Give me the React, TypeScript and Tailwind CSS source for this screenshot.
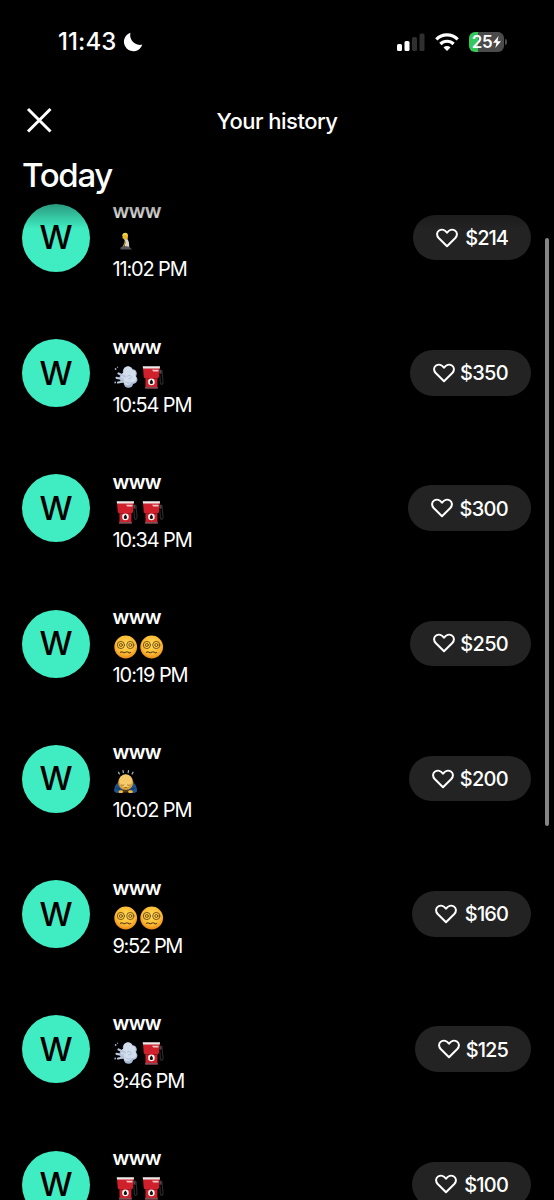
import type { ReactNode } from 'react';

type EmojiName = 'kneel' | 'dash' | 'pump' | 'dizzy' | 'bow';

interface HistoryEntry {
    id: number;
    time: string;
    amount: string;
    emojis: EmojiName[];
    pillClass: string;
    timeClass: string;
    amountClass: string;
}

const entries: HistoryEntry[] = [
    { id: 1, time: '11:02 PM', amount: '$214', emojis: ['kneel'], pillClass: 'w-[118px]', timeClass: 'tracking-[-1.15px]', amountClass: 'tracking-[-1px]' },
    { id: 2, time: '10:54 PM', amount: '$350', emojis: ['dash', 'pump'], pillClass: 'w-[121.5px]', timeClass: 'tracking-[-1.15px]', amountClass: 'tracking-[-0.7px]' },
    { id: 3, time: '10:34 PM', amount: '$300', emojis: ['pump', 'pump'], pillClass: 'w-[123px]', timeClass: 'tracking-[-1.15px]', amountClass: 'tracking-[-0.7px]' },
    { id: 4, time: '10:19 PM', amount: '$250', emojis: ['dizzy', 'dizzy'], pillClass: 'w-[121px]', timeClass: 'tracking-[-1.05px]', amountClass: 'tracking-[-0.7px]' },
    { id: 5, time: '10:02 PM', amount: '$200', emojis: ['bow'], pillClass: 'w-[122.5px]', timeClass: 'tracking-[-1.1px]', amountClass: 'tracking-[-0.7px]' },
    { id: 6, time: '9:52 PM', amount: '$160', emojis: ['dizzy', 'dizzy'], pillClass: 'w-[119px]', timeClass: 'tracking-[-1.35px]', amountClass: 'tracking-[-0.9px]' },
    { id: 7, time: '9:46 PM', amount: '$125', emojis: ['dash', 'pump'], pillClass: 'w-[116px]', timeClass: 'tracking-[-1.2px]', amountClass: 'tracking-[-0.9px]' },
    { id: 8, time: '9:38 PM', amount: '$100', emojis: ['pump', 'pump'], pillClass: 'w-[119px]', timeClass: 'tracking-[-1.3px]', amountClass: 'tracking-[-0.8px]' },
];

const emojiArt: Record<EmojiName, ReactNode> = {
    kneel: (
        <>
            <path d="M9.5 8.500c0-2.200 1.300-3 3-3s2.500 1 2.500 3l-.6 3.200h-3L9.500 10z" fill="#e8b62c" />
            <path d="M9.300 8c0-2.400 1.300-3.200 2.900-3.200 1.800 0 2.800 1.200 2.600 3l-2-.9z" fill="#f6d542" />
            <path d="M11.500 11.200h3c1.600 2 2 5.500 1.500 9h-4.500l.6-4.500z" fill="#d8d6cd" />
            <path d="M12 12.500 10 18l-2 1.800 1.200.5 2-1.800 1.800-4z" fill="#b98c26" />
            <path d="M7.500 19.500c2-1.200 6.500-2 9-.5l2.500 2.400H7.500z" fill="#55525c" />
        </>
    ),
    dash: (
        <>
            <g fill="#a9bbd4">
                <circle cx="15" cy="7.400" r="5.200" />
                <circle cx="19.500" cy="9.500" r="4.300" />
                <circle cx="20" cy="15.500" r="4.400" />
                <circle cx="15.500" cy="19" r="4.800" />
                <circle cx="11.500" cy="14" r="5" />
            </g>
            <g fill="#d3deed">
                <circle cx="15" cy="6.800" r="4.200" />
                <circle cx="19.300" cy="9.300" r="3.400" />
                <circle cx="19.200" cy="14.600" r="4" />
                <circle cx="14.500" cy="17.500" r="3.600" />
                <circle cx="12.500" cy="12.500" r="4.400" />
            </g>
            <path d="M14 12.500c2.500-2 4.500-.6 4.200 1-.3 1.700-2.500 1.800-3 .6M12.500 17.500c1.300 2 3.800 2 5 .4" fill="none" stroke="#a2b5d0" strokeWidth=".8" />
            <path d="M12 12.500 5.500 9.500M10 15l-6.500-1.200M10.500 17.500 5 18.500" stroke="#b9c8dd" strokeWidth="2.200" strokeLinecap="round" />
            <circle cx="2.600" cy="5" r=".9" fill="#9fb2cc" />
            <circle cx="4.500" cy="3.200" r=".7" fill="#8296b2" />
            <circle cx="2.200" cy="18.500" r=".9" fill="#9fb2cc" />
        </>
    ),
    pump: (
        <>
            <path d="M20.500 6.500c2.500-1.200 3 .5 2.700 3l.8 7.500c.3 4-2.500 4.500-2.700 1.200l-.4-7.200" fill="none" stroke="#2c2c31" strokeWidth="1.100" />
            <path d="M20.500 6.200h2v3.500h-2z" fill="#4b4b51" />
            <path d="M4 3.200h16.800l-.8 9.600c-.2 1-.8 1.300-1.600 1.300v10.400H6.500V14.100c-1.200 0-1.700-.5-1.800-1.500z" fill="#cf202c" />
            <path d="M6.500 14h11.900v1H6.500z" fill="#a31420" />
            <path d="M3.700 2.200h17.300l-.2 2.200H4z" fill="#eeeaea" />
            <path d="M13 5.700h6.500v1.700h-5.300z" fill="#f2c4c6" />
            <path d="M6 22.900h12.900v1.600H6z" fill="#77535a" />
            <circle cx="12.400" cy="17.900" r="3.300" fill="#f7f1ef" />
            <path d="M12.400 15.600c.9 1.200 1.600 1.900 1.600 2.800a1.600 1.600 0 0 1-3.200 0c0-.9.700-1.600 1.600-2.800z" fill="#111" />
        </>
    ),
    dizzy: (
        <>
            <defs>
                <radialGradient id="dizzyFace" cx=".5" cy=".4" r=".62">
                    <stop offset="0" stopColor="#ffdc55" />
                    <stop offset=".65" stopColor="#fcbb35" />
                    <stop offset="1" stopColor="#e98412" />
                </radialGradient>
            </defs>
            <circle cx="12.700" cy="13" r="11.400" fill="url(#dizzyFace)" />
            <g fill="none" stroke="#6b4a18" strokeLinecap="round">
                <circle cx="7.900" cy="11" r="3.600" strokeWidth=".9" />
                <circle cx="7.900" cy="11" r="1.500" strokeWidth=".9" />
                <circle cx="17.300" cy="11" r="3.600" strokeWidth=".9" />
                <circle cx="17.300" cy="11" r="1.500" strokeWidth=".9" />
                <path d="M7.500 18.300c.9-.7 1.600-.7 2.500 0s1.700.7 2.600 0 1.700-.7 2.600 0 1.700.7 2.500 0" strokeWidth="1.100" />
            </g>
        </>
    ),
    bow: (
        <>
            <path d="m5.500 3.300.8 1.600M10 1.700l.3 1.800M15.500 1.700l-.3 1.800M20 3.300l-.8 1.600" stroke="#9fb0bb" strokeWidth="1.300" strokeLinecap="round" />
            <path d="M5 13.500C2.500 15.500 1 19 1.200 22.500c1.500 1.500 5 2 7.500 1.200l2-4.700zM20.500 13.500c2.500 2 3.700 5.500 3.500 9-1.500 1.500-5 2-7.500 1.200l-2-4.700z" fill="#1d5490" />
            <path d="M3 19l4 1.200M22 19l-4 1.200" stroke="#123c6c" strokeWidth="1.500" />
            <path d="M8 20.500h9.500l-1.500 3h-6.500z" fill="#4c3720" />
            <circle cx="12.700" cy="13.300" r="7.600" fill="#dda035" />
            <circle cx="12.700" cy="11.800" r="6.500" fill="#f4cb68" />
            <path d="M8 15.800c1 .7 2.300.7 3.200 0M14.200 15.800c1 .7 2.300.7 3.200 0M11.500 18.500h2.500" fill="none" stroke="#8b5716" strokeWidth=".8" />
            <path d="M5.500 22c1.500-1.200 4-1 4.800.5l-.8 1.600H6zM19.800 22c-1.500-1.200-4-1-4.800.5l.8 1.600h3.500z" fill="#f2b733" />
        </>
    ),
};

function Emoji({ name }: { name: EmojiName }) {
    return (
        <svg className="h-[26px] w-[26px] shrink-0" viewBox="0 0 26 26" aria-hidden="true">
            {emojiArt[name]}
        </svg>
    );
}

function StatusBar() {
    return (
        <div className="flex h-[83px] items-center justify-between pr-[47px] pl-[58px]">
            <div className="flex items-center gap-[6px]">
                <span className="text-2xl leading-7 font-medium tracking-[0.1px]">11:43</span>
                <svg className="h-5 w-5" viewBox="0 0 20 20">
                    <path d="M7.500.8A9.400 9.400 0 1 0 19.300 12.600 9.700 9.700 0 0 1 7.500.8z" fill="#fff" />
                </svg>
            </div>
            <div className="flex items-center">
                <svg className="h-5 w-7" viewBox="0 0 28 20">
                    <rect x="0" y="12" width="5" height="7" rx="1.500" fill="#fff" />
                    <rect x="7.500" y="9" width="5" height="10" rx="1.500" fill="#fff" />
                    <rect x="15" y="5" width="5" height="14" rx="1.500" fill="#2f2f2f" />
                    <rect x="22.500" y="1.500" width="5" height="17.500" rx="1.500" fill="#2f2f2f" />
                </svg>
                <svg className="ml-[10px] h-[18px] w-6" viewBox="0 0 24 18">
                    <g fill="none" stroke="#fff" strokeWidth="3.200">
                        <path d="M1.300 6.300a15.200 15.200 0 0 1 21.400 0" />
                        <path d="M5.400 11a9.300 9.300 0 0 1 13.200 0" />
                    </g>
                    <path d="M12 18 8.500 14.400a4.900 4.900 0 0 1 7 0z" fill="#fff" />
                </svg>
                <div className="ml-[10px] flex h-5 w-[35px] items-center justify-center gap-px rounded-[6px] bg-[linear-gradient(90deg,#34c759_9px,#4b4b4b_9px)]">
                    <span className="text-[17px] leading-5 font-semibold tracking-[-0.3px]">25</span>
                    <svg className="h-3 w-2" viewBox="0 0 8 12">
                        <path d="M5.600 0 0 6.700h3.500L2.300 12 8 5.200H4.500z" fill="#fff" />
                    </svg>
                </div>
                <div className="ml-px h-[6px] w-[2px] rounded-r-full bg-[#4b4b4b]" />
            </div>
        </div>
    );
}

function HistoryRow({ entry }: { entry: HistoryEntry }) {
    return (
        <div className="flex h-[135.25px] shrink-0 items-start pr-[23px] pl-[22px]">
            <div className="mt-[7px] flex h-[68px] w-[68px] items-center justify-center rounded-full bg-[#40edc2] text-[33px] leading-none font-medium text-black">
                W
            </div>
            <div className="mt-[0.7px] ml-[22.5px] flex flex-col">
                <span className="h-7 text-xl leading-7 font-semibold tracking-[-0.6px]">www</span>
                <div className="flex h-[30px] items-center pt-[2px]">
                    {entry.emojis.map((name, i) => (
                        <Emoji key={i} name={name} />
                    ))}
                </div>
                <span className={`h-7 text-xl leading-7 ${entry.timeClass}`}>{entry.time}</span>
            </div>
            <button className={`mt-[18px] ml-auto flex h-[45.5px] items-center justify-between rounded-full bg-[#232323] px-[23px] ${entry.pillClass}`}>
                <svg className="h-[22px] w-[22px] shrink-0" viewBox="0 0 22 22" fill="none" stroke="#fff" strokeWidth="2" strokeLinejoin="round">
                    <path d="M11 19.300 2.700 11C.2 8.200.8 5 3.100 3.500 5.800 1.900 9 2.800 11 5.700c2-2.900 5.200-3.800 7.900-2.200C21.200 5 21.800 8.200 19.300 11z" />
                </svg>
                <span className={`pt-px text-xl leading-7 font-medium whitespace-nowrap ${entry.amountClass}`}>{entry.amount}</span>
            </button>
        </div>
    );
}

export default function App() {
    return (
        <div className="relative flex h-[1200px] w-[554px] flex-col overflow-hidden bg-black font-['Inter',sans-serif] text-white">
            <StatusBar />

            {/* Header */}
            <div className="grid h-[74px] shrink-0 grid-cols-[1fr_auto_1fr] items-center px-[26px]">
                <svg className="h-[26px] w-[26px]" viewBox="0 0 26 26">
                    <path d="m2 2 22.500 22.500M24.500 2 2 24.500" stroke="#fff" strokeWidth="3" />
                </svg>
                <h1 className="pt-[2px] text-[22px] leading-7 font-medium tracking-[-0.5px]">Your history</h1>
            </div>
            <h2 className="h-[39.8px] shrink-0 pl-[22px] text-[33px] leading-[36px] font-medium tracking-[-1.3px]">Today</h2>

            {/* History list */}
            <div className="relative min-h-0 flex-1 overflow-hidden">
                {entries.map((entry) => (
                    <HistoryRow key={entry.id} entry={entry} />
                ))}
                <div className="pointer-events-none absolute inset-x-0 top-0 h-[32px] bg-linear-to-b from-black/45 to-transparent" />
                <div className="absolute top-[41.500px] right-[5px] h-[588px] w-1 rounded-full bg-[#858585]" />
            </div>
        </div>
    );
}
